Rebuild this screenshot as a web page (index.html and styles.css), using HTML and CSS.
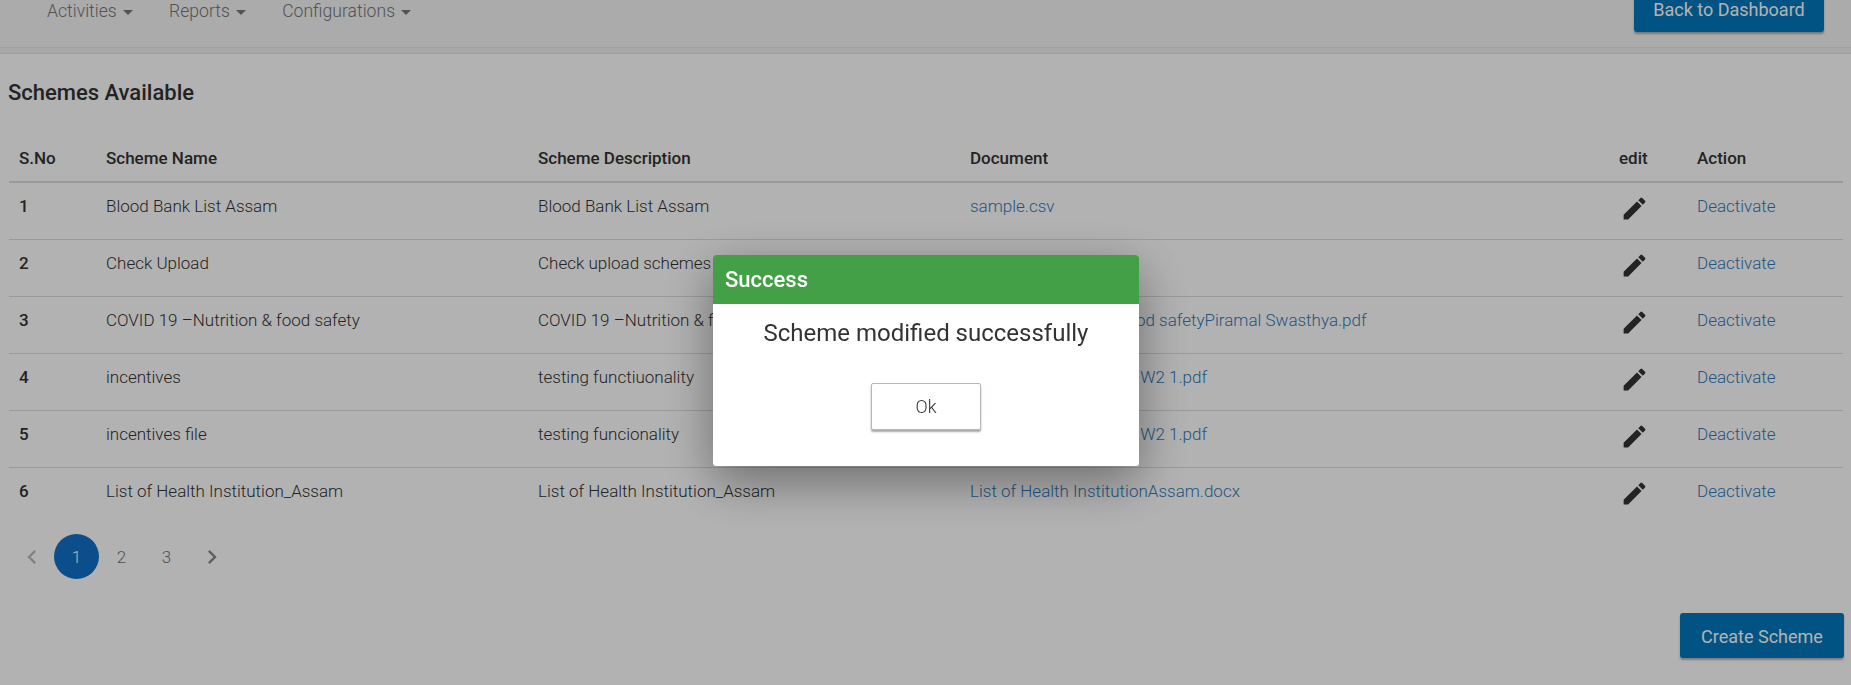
FILE: index.html
```html
<!DOCTYPE html>
<html lang="en">
<head>
<meta charset="utf-8">
<title>Schemes Available</title>
<link rel="stylesheet" href="styles.css">
</head>
<body>
<div class="page">
  <nav class="nav">
    <ul class="menu">
      <li>Activities <span class="caret"></span></li>
      <li>Reports <span class="caret"></span></li>
      <li>Configurations <span class="caret"></span></li>
    </ul>
    <button class="btn back">Back to Dashboard</button>
  </nav>
  <div class="strip"></div>
  <h1 class="title">Schemes Available</h1>
  <table class="table">
    <colgroup>
      <col class="c1"><col class="c2"><col class="c3"><col class="c4"><col class="c5"><col class="c6">
    </colgroup>
    <thead>
      <tr><th>S.No</th><th>Scheme Name</th><th>Scheme Description</th><th>Document</th><th>edit</th><th>Action</th></tr>
    </thead>
    <tbody>
      <tr><td class="num">1</td><td>Blood Bank List Assam</td><td>Blood Bank List Assam</td><td><a>sample.csv</a></td><td><svg class="pen" viewBox="0 0 24 24"><path d="M3 17.25V21h3.75L17.81 9.94l-3.75-3.75L3 17.25zM20.71 7.04a1 1 0 0 0 0-1.41l-2.34-2.34a1 1 0 0 0-1.41 0l-1.83 1.83 3.75 3.75 1.83-1.83z"/></svg></td><td><a>Deactivate</a></td></tr>
      <tr><td class="num">2</td><td>Check Upload</td><td>Check upload schemes</td><td><a>sample.csv</a></td><td><svg class="pen" viewBox="0 0 24 24"><path d="M3 17.25V21h3.75L17.81 9.94l-3.75-3.75L3 17.25zM20.71 7.04a1 1 0 0 0 0-1.41l-2.34-2.34a1 1 0 0 0-1.41 0l-1.83 1.83 3.75 3.75 1.83-1.83z"/></svg></td><td><a>Deactivate</a></td></tr>
      <tr><td class="num">3</td><td>COVID 19 –Nutrition &amp; food safety</td><td>COVID 19 –Nutrition &amp; food safety</td><td><a>COVID19 Nutrition&amp; food safetyPiramal Swasthya.pdf</a></td><td><svg class="pen" viewBox="0 0 24 24"><path d="M3 17.25V21h3.75L17.81 9.94l-3.75-3.75L3 17.25zM20.71 7.04a1 1 0 0 0 0-1.41l-2.34-2.34a1 1 0 0 0-1.41 0l-1.83 1.83 3.75 3.75 1.83-1.83z"/></svg></td><td><a>Deactivate</a></td></tr>
      <tr><td class="num">4</td><td>incentives</td><td>testing functiuonality</td><td><a>Incentives Guidelines - W2 1.pdf</a></td><td><svg class="pen" viewBox="0 0 24 24"><path d="M3 17.25V21h3.75L17.81 9.94l-3.75-3.75L3 17.25zM20.71 7.04a1 1 0 0 0 0-1.41l-2.34-2.34a1 1 0 0 0-1.41 0l-1.83 1.83 3.75 3.75 1.83-1.83z"/></svg></td><td><a>Deactivate</a></td></tr>
      <tr><td class="num">5</td><td>incentives file</td><td>testing funcionality</td><td><a>Incentives Guidelines - W2 1.pdf</a></td><td><svg class="pen" viewBox="0 0 24 24"><path d="M3 17.25V21h3.75L17.81 9.94l-3.75-3.75L3 17.25zM20.71 7.04a1 1 0 0 0 0-1.41l-2.34-2.34a1 1 0 0 0-1.41 0l-1.83 1.83 3.75 3.75 1.83-1.83z"/></svg></td><td><a>Deactivate</a></td></tr>
      <tr class="last"><td class="num">6</td><td>List of Health Institution_Assam</td><td>List of Health Institution_Assam</td><td><a>List of Health InstitutionAssam.docx</a></td><td><svg class="pen" viewBox="0 0 24 24"><path d="M3 17.25V21h3.75L17.81 9.94l-3.75-3.75L3 17.25zM20.71 7.04a1 1 0 0 0 0-1.41l-2.34-2.34a1 1 0 0 0-1.41 0l-1.83 1.83 3.75 3.75 1.83-1.83z"/></svg></td><td><a>Deactivate</a></td></tr>
    </tbody>
  </table>
  <div class="pager">
    <span class="pg"><svg class="chev off" viewBox="0 0 24 24"><path d="M15.410 7.410 14 6l-6 6 6 6 1.410-1.410L10.830 12z"/></svg></span>
    <span class="pg active">1</span>
    <span class="pg">2</span>
    <span class="pg">3</span>
    <span class="pg"><svg class="chev" viewBox="0 0 24 24"><path d="M10 6 8.590 7.410 13.170 12l-4.580 4.590L10 18l6-6z"/></svg></span>
  </div>
  <div class="foot"><button class="btn create">Create Scheme</button></div>
</div>
<div class="backdrop"></div>
<div class="modal">
  <div class="modal-head">Success</div>
  <p class="modal-msg">Scheme modified successfully</p>
  <div class="modal-actions"><button class="ok">Ok</button></div>
</div>
</body>
</html>
```
FILE: styles.css
```css
* { box-sizing: border-box; }
html, body { margin: 0; height: 685px; overflow: hidden; }
body { font-family: Roboto, "Liberation Sans", sans-serif; background: #fff; color: #333; font-weight: 300; }
.page { height: 685px; overflow: hidden; }
.nav { height: 48px; background: #f5f5f5; display: flex; justify-content: space-between; align-items: flex-start; padding: 0 27px 0 47px; border-bottom: 1px solid #e7e7e7; }
.menu { list-style: none; margin: 0; padding: 0; display: flex; gap: 36px; font-size: 17.600px; color: #777; line-height: 22px; }
.caret { display: inline-block; width: 0; height: 0; margin-left: 2px; vertical-align: middle; border-top: 5px solid #777; border-left: 5px solid transparent; border-right: 5px solid transparent; }
.btn { font-family: inherit; font-weight: 400; border: 0; border-radius: 3px; background: #0277bd; color: #fff; box-shadow: 0 2px 2px rgba(0,0,0,.3); }
.back { width: 190px; height: 48px; margin-top: -16px; font-size: 18px; padding: 2px 0 0; }
.strip { height: 6px; background: #f0f0f0; border-bottom: 1px solid #e4e4e4; }
.title { margin: 0; padding: 27px 0 0 8px; font-size: 22px; line-height: 24px; font-weight: 500; color: #333; }
.table { margin: 29px 8px 0 9px; width: 1834px; border-collapse: collapse; table-layout: fixed; font-size: 17px; }
.c1 { width: 87px; } .c2 { width: 432px; } .c3 { width: 432px; } .c4 { width: 649px; } .c5 { width: 78px; } .c6 { width: 156px; }
.table th { text-align: left; font-weight: 500; padding: 0 10px; height: 48px; border-bottom: 2px solid #ddd; vertical-align: middle; color: #333; }
.table td { padding: 0 10px 10px; height: 57px; border-bottom: 1px solid #ddd; color: #333; vertical-align: middle; }
.table .last td { border-bottom: 0; }
.table td.num { font-weight: 500; }
.table a { color: #337ab7; }
.pen { width: 29px; height: 29px; display: block; fill: #333; margin-left: 1px; margin-top: 5px; }
.pager { display: flex; margin: 10px 0 0 9px; height: 45px; }
.pg { width: 45px; height: 45px; border-radius: 50%; display: flex; align-items: center; justify-content: center; font-size: 17px; color: #777; }
.pg.active { background: #1170c8; color: #fff; }
.chev { width: 28px; height: 28px; fill: #888; }
.chev.off { fill: #bbb; }
.foot { display: flex; justify-content: flex-end; padding: 34px 7px 0 0; }
.create { width: 164px; height: 45px; font-size: 18px; padding-top: 2px; }
.backdrop { position: fixed; inset: 0; background: rgba(0,0,0,.3); }
.modal { position: fixed; left: 713px; top: 255px; width: 426px; height: 211px; background: #fff; border-radius: 3px; overflow: hidden; box-shadow: 0 15px 50px rgba(0,0,0,.4); }
.modal-head { height: 49px; background: #43a047; color: #fff; font-size: 22px; font-weight: 500; line-height: 49px; padding-left: 12px; }
.modal-msg { margin: 12px 0 0; text-align: center; font-size: 24px; line-height: 34px; color: #333; font-weight: 400; }
.modal-actions { display: flex; justify-content: center; margin-top: 33px; }
.ok { width: 110px; height: 47px; background: #fff; border: 1px solid #bdb5b8; border-radius: 2px; box-shadow: 0 2px 2px rgba(0,0,0,.35); font-family: inherit; font-weight: 300; font-size: 18px; color: #333; }
```
